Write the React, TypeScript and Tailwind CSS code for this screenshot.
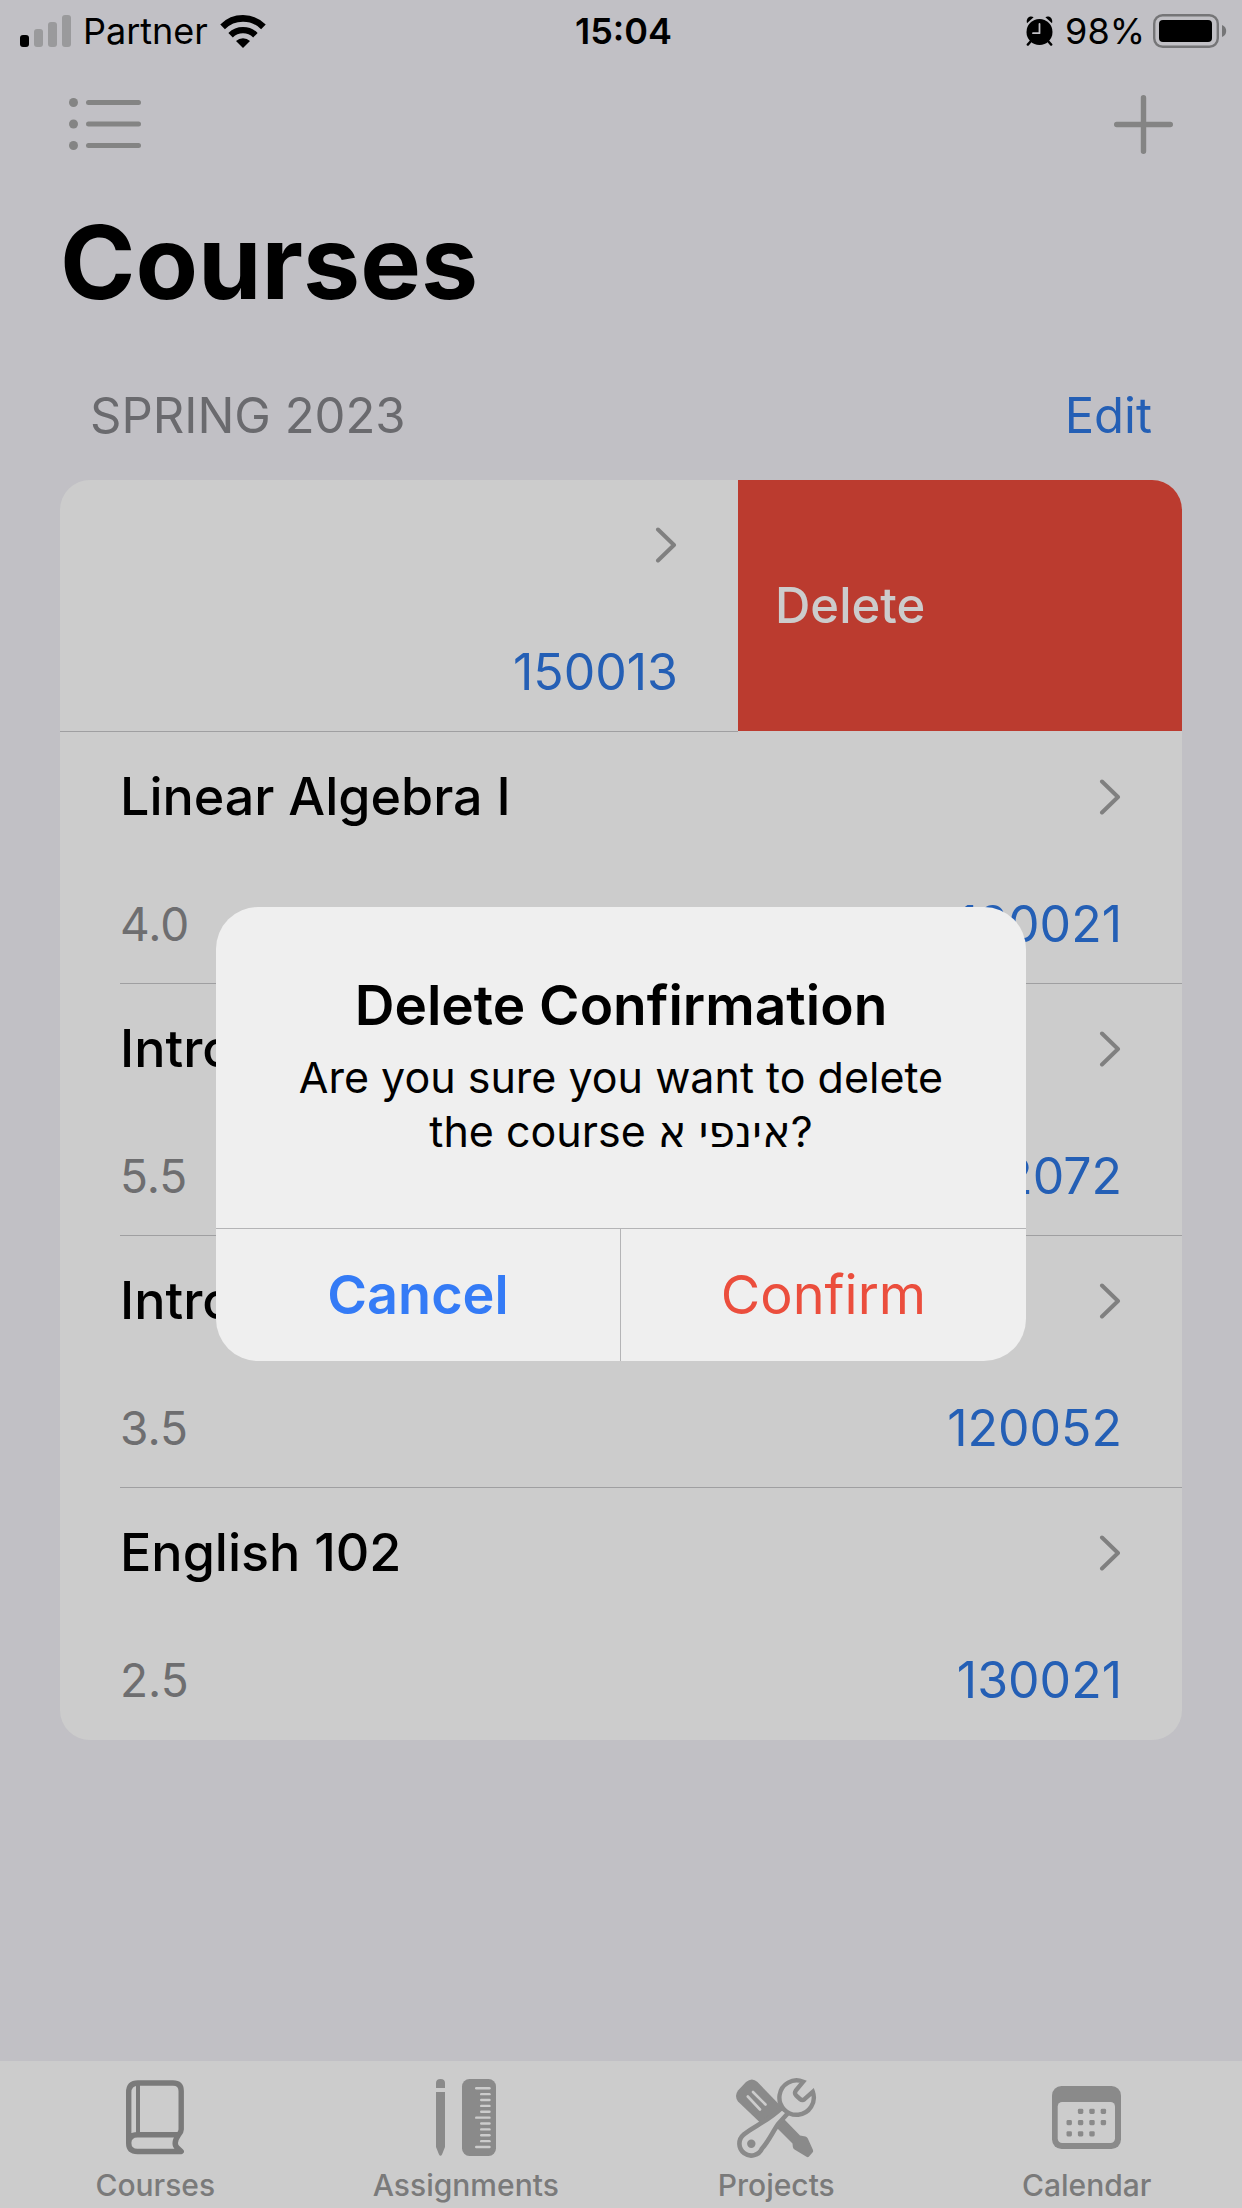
import type { ReactNode } from "react";

type Course = { name: string; credits: string; code: string };

const courses: Course[] = [
  { name: "Linear Algebra I", credits: "4.0", code: "120021" },
  { name: "Intro", credits: "5.5", code: "142072" },
  { name: "Intro", credits: "3.5", code: "120052" },
  { name: "English 102", credits: "2.5", code: "130021" },
];

function SignalIcon() {
  return (
    <svg width="51" height="32" viewBox="0 0 51 32" aria-hidden="true">
      <rect x="0" y="20" width="9" height="12" rx="3" fill="#000" />
      <rect x="14" y="14" width="9" height="18" rx="3" fill="#9a9a9c" />
      <rect x="28" y="7" width="9" height="25" rx="3" fill="#9a9a9c" />
      <rect x="42" y="0" width="9" height="32" rx="3" fill="#9a9a9c" />
    </svg>
  );
}

function WifiIcon() {
  return (
    <svg width="46" height="33" viewBox="0 0 46 33" aria-hidden="true">
      <path d="M2.6 11.8a29 29 0 0 1 40.8 0" fill="none" stroke="#000" strokeWidth="6.6" />
      <path d="M10.6 20.2a17.8 17.8 0 0 1 24.8 0" fill="none" stroke="#000" strokeWidth="6.4" />
      <path d="M16 26.1a10.2 10.2 0 0 1 14 0L23 33z" fill="#000" />
    </svg>
  );
}

function AlarmIcon() {
  return (
    <svg width="27" height="30" viewBox="0 0 27 30" aria-hidden="true">
      <circle cx="13.5" cy="16" r="13" fill="#000" />
      <path d="M1 7.2C-.3 2.6 3.7-.8 7.6 1.200zM26 7.2C27.3 2.6 23.3-.8 19.4 1.200z" fill="#000" />
      <path d="M5 25l-3.200 3.600M22 25l3.200 3.600" stroke="#000" strokeWidth="2.400" strokeLinecap="round" />
      <path d="M13.500 8v9.200H7" fill="none" stroke="#c1c0c5" strokeWidth="1.800" strokeLinecap="round" strokeLinejoin="round" />
    </svg>
  );
}

function BatteryIcon() {
  return (
    <svg width="74" height="34" viewBox="0 0 74 34" aria-hidden="true">
      <rect x="1.200" y="1.200" width="63.600" height="31.600" rx="8.500" fill="none" stroke="#757577" strokeWidth="2.400" />
      <rect x="6" y="6" width="53" height="22" rx="4" fill="#000" />
      <path d="M69 11v12c2.600-1 4.200-3.200 4.200-6S71.600 12 69 11z" fill="#757577" />
    </svg>
  );
}

function ListIcon() {
  return (
    <svg width="72" height="52" viewBox="0 0 72 52" fill="#848484" aria-hidden="true">
      <circle cx="4.500" cy="4.500" r="4.500" />
      <circle cx="4.500" cy="26" r="4.500" />
      <circle cx="4.500" cy="47.500" r="4.500" />
      <rect x="17" y="2" width="55" height="5" rx="2.500" />
      <rect x="17" y="23.500" width="55" height="5" rx="2.500" />
      <rect x="17" y="45" width="55" height="5" rx="2.500" />
    </svg>
  );
}

function PlusIcon() {
  return (
    <svg width="59" height="59" viewBox="0 0 59 59" aria-hidden="true">
      <path d="M29.500 2.700v53.600M2.700 29.500h53.600" stroke="#848484" strokeWidth="5.400" strokeLinecap="round" />
    </svg>
  );
}

function Chevron() {
  return (
    <svg width="24" height="36" viewBox="0 0 24 36" aria-hidden="true">
      <path d="M4 2.500l16 15.500L4 33.500" fill="none" stroke="#808080" strokeWidth="4" strokeLinecap="round" strokeLinejoin="round" />
    </svg>
  );
}

function BookIcon() {
  return (
    <svg width="58" height="75" viewBox="0 0 58 75" fill="none" stroke="#7a7a7a" aria-hidden="true">
      <path
        d="M2.700 63V12.500Q2.700 3 12 3H47Q55.200 3 55.200 11V49.500Q55.200 52 52.500 55Q46.500 63.500 51.500 68L55.200 71.500H11.500Q2.700 71.500 2.700 63Q2.700 54.800 11.500 54.800H52.500"
        strokeWidth="5.400"
        strokeLinejoin="round"
      />
      <path d="M12 4v50" strokeWidth="4" />
    </svg>
  );
}

function PencilRulerIcon() {
  const ticks = Array.from({ length: 11 }, (_, i) => i);
  return (
    <svg width="60" height="77" viewBox="0 0 60 77" aria-hidden="true">
      <path d="M0 9V4Q0 0 4.500 0T9 4V9zM0 13H9V68L6 75.500Q4.500 78 3 75.500L0 68z" fill="#8a8a8a" />
      <rect x="26" y="0" width="34" height="77" rx="7.500" fill="#8a8a8a" />
      {ticks.map((i) => (
        <path
          key={i}
          d={`M${i % 5 === 0 ? 40.2 : 45.2} ${9.3 + i * 5.87}H53.500`}
          stroke="#cccccc"
          strokeWidth="2.400"
          strokeLinecap="round"
        />
      ))}
    </svg>
  );
}

function ToolsIcon() {
  return (
    <svg width="82" height="81" viewBox="0 0 82 81" aria-hidden="true">
      <path d="M3 24.500Q-1 19 3 13.500L11 5Q17 0 22.500 5L48 31.500L25.500 46z" fill="#8a8a8a" />
      <path d="M12.800 19.500L25 32.500M18 15L30.500 27.500" stroke="#cccccc" strokeWidth="2.600" strokeLinecap="round" />
      <path d="M48 41L65 58.500L70.500 59.500Q72 60 72.800 61.500L78 73Q78.500 74.500 77.500 75.500L74 79.500Q73 80.600 71.500 79.800L59.500 72.500Q57.800 71.500 57.800 69.500L57.500 66.500L41.500 50.500z" fill="#8a8a8a" />
      <path
        d="M54 35L44 46C38.500 53 34 64 27 71.500A11.800 11.800 0 1 1 8.500 57.800C17 50 32 45 46.500 31z"
        fill="#cccccc"
        stroke="#8a8a8a"
        strokeWidth="4.600"
        strokeLinejoin="round"
      />
      <circle cx="16.300" cy="66.700" r="4.200" fill="#8a8a8a" />
      <path
        d="M68.200 4.700A17.200 17.200 0 1 0 77.800 14.800L69.500 22.200Q67.300 24 65 22L61.300 18.700Q59 16.400 60.800 13.600z"
        fill="#cccccc"
        stroke="#8a8a8a"
        strokeWidth="4.400"
      />
    </svg>
  );
}

function CalendarIcon() {
  const dots: [number, number][] = [
    [1, 0], [2, 0], [3, 0],
    [0, 1], [1, 1], [2, 1], [3, 1],
    [0, 2], [1, 2], [2, 2],
  ];
  return (
    <svg width="69" height="63" viewBox="0 0 69 63" aria-hidden="true">
      <rect width="69" height="63" rx="9.500" fill="#8a8a8a" />
      <rect x="5.700" y="16" width="57.300" height="41" rx="4.500" fill="#cccccc" />
      {dots.map(([c, r]) => (
        <rect key={`${c}-${r}`} x={14.5 + c * 11.4} y={22.8 + r * 11.2} width="5.400" height="5.200" rx="1.400" fill="#8a8a8a" />
      ))}
    </svg>
  );
}

function Code({ children }: { children: ReactNode }) {
  return <span className="text-[50px] leading-[60px] text-[#245fb5]">{children}</span>;
}

function CourseRow({ course, last }: { course: Course; last: boolean }) {
  return (
    <li className="pl-[60px]">
      <div className={`flex flex-col gap-[67px] border-b pt-[35px] pr-[60px] pb-[29px] ${last ? "border-transparent" : "border-[#9f9fa1]"}`}>
        <div className="flex items-center justify-between">
          <span className="text-[52px] leading-[60px] font-medium text-black">{course.name}</span>
          <Chevron />
        </div>
        <div className="flex items-center justify-between">
          <span className="text-[46px] leading-[60px] text-[#6e6e70]">{course.credits}</span>
          <Code>{course.code}</Code>
        </div>
      </div>
    </li>
  );
}

const tabs = [
  { label: "Courses", icon: <BookIcon />, active: true },
  { label: "Assignments", icon: <PencilRulerIcon />, active: false },
  { label: "Projects", icon: <ToolsIcon />, active: false },
  { label: "Calendar", icon: <CalendarIcon />, active: false },
];

export default function App() {
  return (
    <div className="relative flex min-h-screen flex-col bg-[#c1c0c5] font-['Inter','DejaVu_Sans',sans-serif] text-black">
      <header className="flex h-[62px] items-center px-[15px] text-[36px] leading-[44px]">
        <div className="flex flex-1 items-center gap-3 pl-[5px]">
          <SignalIcon />
          <span>Partner</span>
          <WifiIcon />
        </div>
        <time className="font-semibold">15:04</time>
        <div className="flex flex-1 items-center justify-end gap-2">
          <AlarmIcon />
          <span className="pl-1">98%</span>
          <BatteryIcon />
        </div>
      </header>

      <nav className="flex h-[124px] items-center justify-between px-[69px]" aria-label="Course actions">
        <button type="button" aria-label="Show list"><ListIcon /></button>
        <button type="button" aria-label="Add course"><PlusIcon /></button>
      </nav>

      <main className="flex-1 px-[60px] pt-[14px] pb-20">
        <h1 className="text-[102px] leading-[124px] font-bold">Courses</h1>
        <section>
          <div className="mt-[62px] mb-[34px] flex items-center justify-between px-[30px] text-[49px] leading-[60px]">
            <h2 className="text-[#6a6a6e]">SPRING 2023</h2>
            <button type="button" className="text-[#245fb5]">Edit</button>
          </div>
          <ul className="overflow-hidden rounded-[30px] bg-[#cccccc]">
            <li className="flex">
              <div className="flex flex-1 flex-col items-end gap-[67px] border-b border-[#9f9fa1] pt-[35px] pr-[60px] pb-[29px]">
                <div className="flex h-[60px] items-center"><Chevron /></div>
                <Code>150013</Code>
              </div>
              <button type="button" className="mb-px w-[444px] bg-[#bb3b2f] pl-[37px] text-left text-[49px] leading-[60px] font-medium text-[#cccccc]">
                Delete
              </button>
            </li>
            {courses.map((course, i) => (
              <CourseRow key={course.code} course={course} last={i === courses.length - 1} />
            ))}
          </ul>
        </section>
      </main>

      <nav className="grid grid-cols-4 bg-[#cccccc]" aria-label="Tabs">
        {tabs.map((tab) => (
          <button key={tab.label} type="button" aria-current={tab.active ? "page" : undefined} className="flex flex-col items-center gap-[9px] pt-4 pb-[5px]">
            <span className="flex h-[81px] items-center">{tab.icon}</span>
            <span className="text-[30px] leading-[36px] font-medium text-[#7a7a7a]">{tab.label}</span>
          </button>
        ))}
      </nav>

      <div className="absolute inset-0 flex items-center justify-center px-6 pt-[60px]">
        <div role="alertdialog" aria-modal="true" aria-labelledby="dialog-title" aria-describedby="dialog-message" className="w-[810px] max-w-full overflow-hidden rounded-[42px] bg-[#efefef]">
          <div className="px-[60px] pt-[65px] pb-[70px] text-center">
            <h2 id="dialog-title" className="text-[55px] leading-[66px] font-semibold">Delete Confirmation</h2>
            <p id="dialog-message" className="mt-3 text-[43px] leading-[54px]">
              Are you sure you want to delete the course אינפי א?
            </p>
          </div>
          <div className="grid grid-cols-2 divide-x divide-[#b4b4b6] border-t border-[#b4b4b6] text-[54px] leading-[66px]">
            <button type="button" className="py-[33px] font-semibold text-[#347bf6]">Cancel</button>
            <button type="button" className="py-[33px] text-[#eb4e3d]">Confirm</button>
          </div>
        </div>
      </div>
    </div>
  );
}
